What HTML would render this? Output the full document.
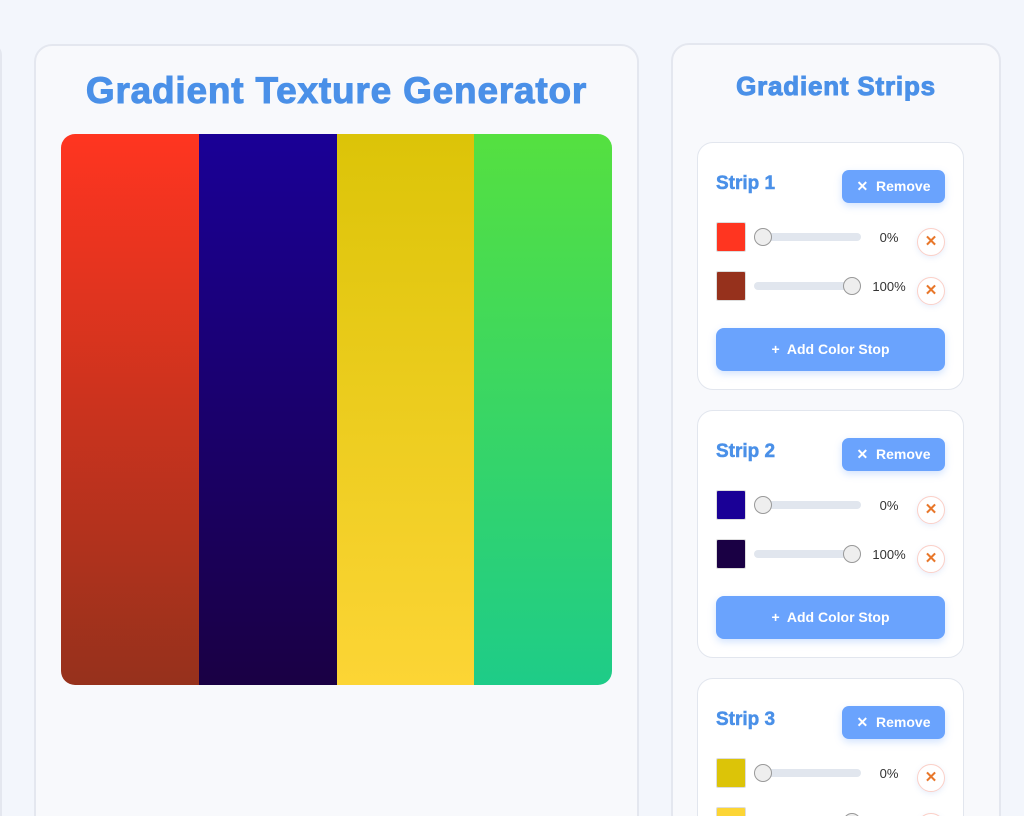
<!DOCTYPE html>
<html><head><meta charset="utf-8"><style>
*{box-sizing:border-box;margin:0;padding:0}
html,body{width:1024px;height:816px;overflow:hidden}
body{background:#f3f6fc;font-family:"Liberation Sans",sans-serif;position:relative}
.abs{position:absolute}
.panel{position:absolute;background:#f8f9fc;border:2px solid #e4e7ef;border-radius:18px}
.h1{position:absolute;color:#4a90e8;font-weight:bold;white-space:nowrap;text-align:center;-webkit-text-stroke:1px #4a90e8}
.card{position:absolute;left:697px;width:267px;height:248px;background:#fff;border:1px solid #e2e6ee;border-radius:16px}
.st{position:absolute;left:18px;top:30px;font-size:19px;font-weight:bold;color:#4a90e8;-webkit-text-stroke:0.5px #4a90e8}
.rm{position:absolute;left:144px;top:27px;width:103px;height:33px;background:#6aa3fd;border-radius:7px;color:#fff;font-weight:bold;font-size:14px;line-height:33px;text-align:center;box-shadow:0 3px 8px rgba(106,163,253,.3)}
.sw{position:absolute;left:18px;width:30px;height:30px;border:1px solid #ddd;border-radius:2px}
.tr{position:absolute;left:56px;width:107px;height:8px;background:#e1e6ee;border-radius:4px}
.th{position:absolute;top:-5px;width:18px;height:18px;border-radius:50%;background:#eee;border:1px solid #999}
.pc{position:absolute;left:167px;width:48px;text-align:center;font-size:13px;color:#333}
.x{position:absolute;left:219px;width:28px;height:28px;border-radius:50%;background:#fff;border:1px solid #fbd0c8;color:#e8772a;font-size:15px;font-weight:bold;text-align:center;line-height:26px;box-shadow:0 2px 6px rgba(100,140,220,.15)}
.add{position:absolute;left:18px;top:185px;width:229px;height:43px;background:#6aa3fd;border-radius:8px;color:#fff;font-weight:bold;font-size:14px;line-height:43px;text-align:center;box-shadow:0 3px 8px rgba(106,163,253,.3)}
</style></head><body>
<div class="panel" style="left:-20px;top:44px;width:22px;height:790px"></div>
<div class="panel" style="left:34px;top:44px;width:605px;height:790px"></div>
<div class="h1" style="left:34px;width:605px;top:70px;font-size:37px;letter-spacing:0.8px">Gradient Texture Generator</div>
<div class="abs" style="left:61px;top:134px;width:551px;height:551px;border-radius:14px;overflow:hidden;display:flex">
<div style="flex:1;background:linear-gradient(#ff3520,#96311c)"></div>
<div style="flex:1;background:linear-gradient(#1a0096,#1a0044)"></div>
<div style="flex:1;background:linear-gradient(#dcc408,#fcd535)"></div>
<div style="flex:1;background:linear-gradient(#55e040,#1ecc88)"></div>
</div>
<div class="panel" style="left:671px;top:43px;width:330px;height:790px"></div>
<div class="h1" style="left:671px;width:330px;top:71px;font-size:26px;letter-spacing:0.8px">Gradient Strips</div>

<div class="card" style="top:142px">
<div class="st">Strip 1</div><div class="rm">✕&nbsp; Remove</div>
<div class="sw" style="top:79px;background:#ff3520"></div>
<div class="tr" style="top:90px"><div class="th" style="left:0"></div></div>
<div class="pc" style="top:87px">0%</div><div class="x" style="top:85px">✕</div>
<div class="sw" style="top:128px;background:#96311c"></div>
<div class="tr" style="top:139px"><div class="th" style="left:89px"></div></div>
<div class="pc" style="top:136px">100%</div><div class="x" style="top:134px">✕</div>
<div class="add">+&nbsp; Add Color Stop</div>
</div>

<div class="card" style="top:410px">
<div class="st">Strip 2</div><div class="rm">✕&nbsp; Remove</div>
<div class="sw" style="top:79px;background:#1a0096"></div>
<div class="tr" style="top:90px"><div class="th" style="left:0"></div></div>
<div class="pc" style="top:87px">0%</div><div class="x" style="top:85px">✕</div>
<div class="sw" style="top:128px;background:#1a0044"></div>
<div class="tr" style="top:139px"><div class="th" style="left:89px"></div></div>
<div class="pc" style="top:136px">100%</div><div class="x" style="top:134px">✕</div>
<div class="add">+&nbsp; Add Color Stop</div>
</div>

<div class="card" style="top:678px;height:160px;overflow:hidden">
<div class="st">Strip 3</div><div class="rm">✕&nbsp; Remove</div>
<div class="sw" style="top:79px;background:#dcc408"></div>
<div class="tr" style="top:90px"><div class="th" style="left:0"></div></div>
<div class="pc" style="top:87px">0%</div><div class="x" style="top:85px">✕</div>
<div class="sw" style="top:128px;background:#fcd535"></div>
<div class="tr" style="top:139px"><div class="th" style="left:89px"></div></div>
<div class="x" style="top:134px">✕</div>
</div>
</body></html>
